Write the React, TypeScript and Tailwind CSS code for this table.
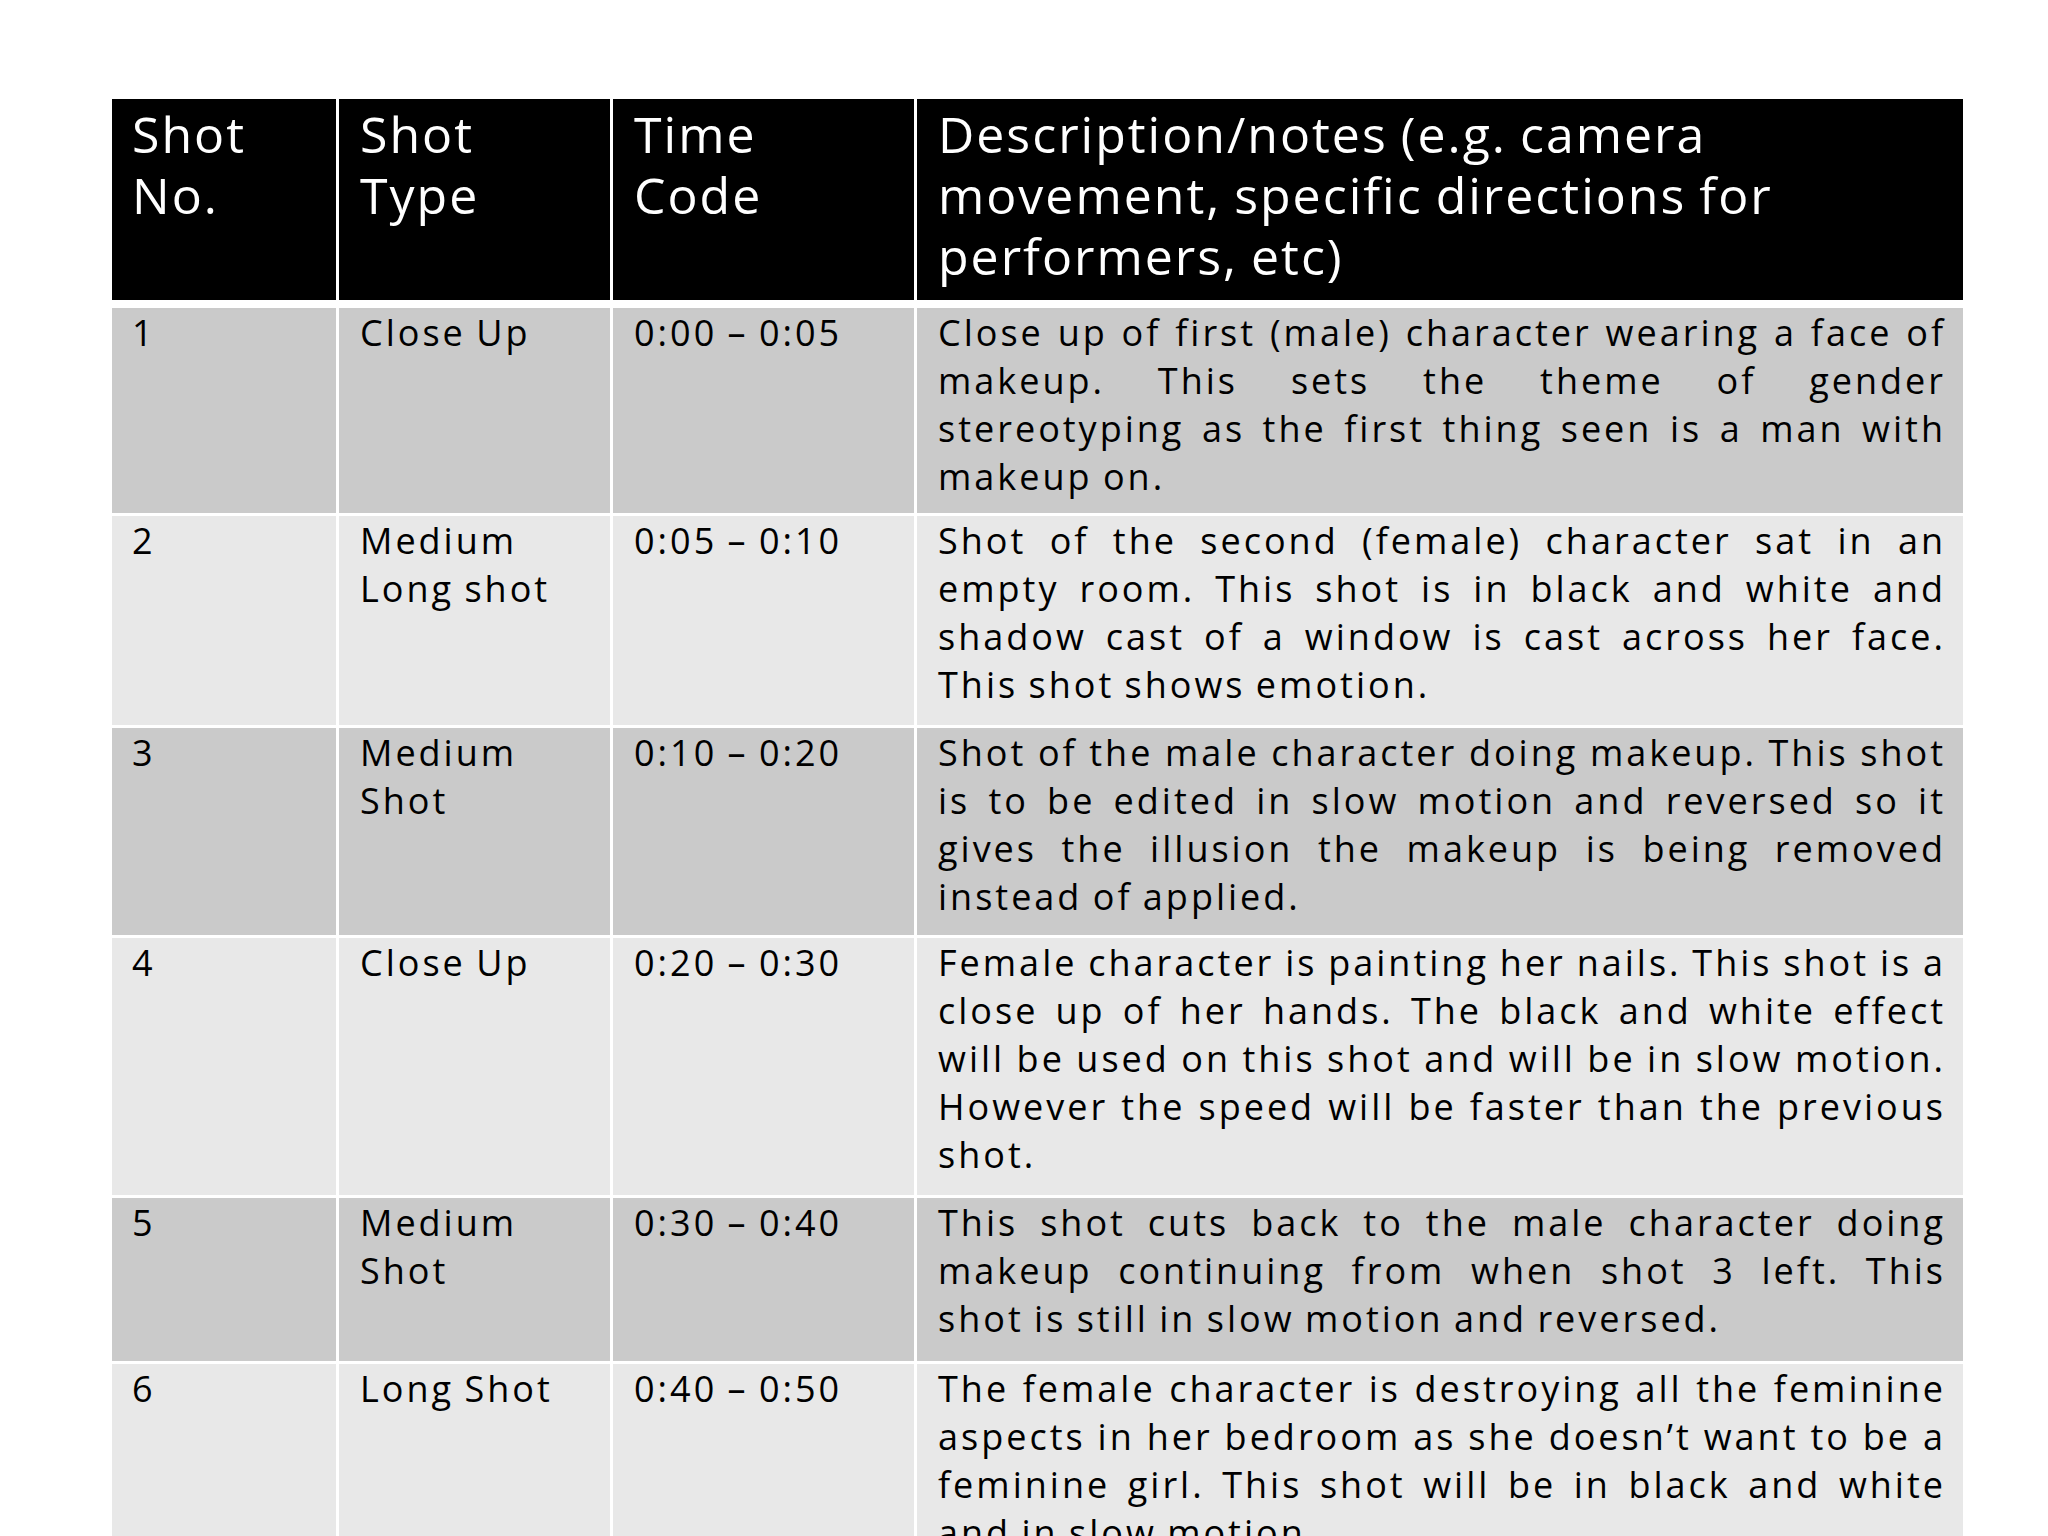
const ROWS = [
  {
    no: '1',
    type: ['Close Up'],
    time: '0:00 – 0:05',
    h: 'h-[205px]',
    dark: true,
    lines: [
      'Close up of first (male) character wearing a face of',
      'makeup. This sets the theme of gender',
      'stereotyping as the first thing seen is a man with',
      'makeup on.',
    ],
  },
  {
    no: '2',
    type: ['Medium', 'Long shot'],
    time: '0:05 – 0:10',
    h: 'h-[209px]',
    dark: false,
    lines: [
      'Shot of the second (female) character sat in an',
      'empty room. This shot is in black and white and',
      'shadow cast of a window is cast across her face.',
      'This shot shows emotion.',
    ],
  },
  {
    no: '3',
    type: ['Medium', 'Shot'],
    time: '0:10 – 0:20',
    h: 'h-[207px]',
    dark: true,
    lines: [
      'Shot of the male character doing makeup. This shot',
      'is to be edited in slow motion and reversed so it',
      'gives the illusion the makeup is being removed',
      'instead of applied.',
    ],
  },
  {
    no: '4',
    type: ['Close Up'],
    time: '0:20 – 0:30',
    h: 'h-[257px]',
    dark: false,
    lines: [
      'Female character is painting her nails. This shot is a',
      'close up of her hands. The black and white effect',
      'will be used on this shot and will be in slow motion.',
      'However the speed will be faster than the previous',
      'shot.',
    ],
  },
  {
    no: '5',
    type: ['Medium', 'Shot'],
    time: '0:30 – 0:40',
    h: 'h-[163px]',
    dark: true,
    lines: [
      'This shot cuts back to the male character doing',
      'makeup continuing from when shot 3 left. This',
      'shot is still in slow motion and reversed.',
    ],
  },
  {
    no: '6',
    type: ['Long Shot'],
    time: '0:40 – 0:50',
    h: 'h-[260px]',
    dark: false,
    lines: [
      'The female character is destroying all the feminine',
      'aspects in her bedroom as she doesn’t want to be a',
      'feminine girl. This shot will be in black and white',
      'and in slow motion.',
    ],
  },
];

const GRID = 'grid grid-cols-[224px_271px_301px_1046px] gap-x-[3px]';

export default function App() {
  return (
    <div className="h-[1536px] w-[2048px] overflow-hidden bg-white pl-[112px] pt-[99px] font-['Open_Sans',sans-serif]">
      <div className="w-[1850px]">
        {/* header */}
        <div className={`${GRID} h-[201px] text-[50px] leading-[61px] tracking-[2px] text-white`}>
          <div className="bg-black px-[20px] pt-[5px]">
            Shot
            <br />
            No.
          </div>
          <div className="bg-black px-[21px] pt-[5px]">
            Shot
            <br />
            Type
          </div>
          <div className="bg-black px-[21px] pt-[5px]">
            Time
            <br />
            Code
          </div>
          <div className="bg-black px-[21px] pt-[5px] [word-spacing:-2px]">
            Description/notes (e.g. camera
            <br />
            movement, specific directions for
            <br />
            performers, etc)
          </div>
        </div>

        {/* body rows */}
        <div className="mt-[8px] flex flex-col gap-y-[3px] text-[36px] leading-[48px] tracking-[3px] text-black [word-spacing:-2px]">
          {ROWS.map((r) => {
            const bg = r.dark ? 'bg-[#cacaca]' : 'bg-[#e8e8e8]';
            return (
              <div key={r.no} className={`${GRID} ${r.h} shrink-0`}>
                <div className={`${bg} px-[20px] pt-[1px]`}>{r.no}</div>
                <div className={`${bg} px-[21px] pt-[1px]`}>
                  {r.type.map((t) => (
                    <div key={t}>{t}</div>
                  ))}
                </div>
                <div className={`${bg} px-[21px] pt-[1px]`}>{r.time}</div>
                <div className={`${bg} pl-[21px] pr-[17px] pt-[1px]`}>
                  {r.lines.map((l, i) => (
                    <div
                      key={i}
                      className={
                        i < r.lines.length - 1
                          ? 'whitespace-nowrap text-justify [text-align-last:justify]'
                          : 'whitespace-nowrap text-left'
                      }
                    >
                      {l}
                    </div>
                  ))}
                </div>
              </div>
            );
          })}
        </div>
      </div>
    </div>
  );
}
